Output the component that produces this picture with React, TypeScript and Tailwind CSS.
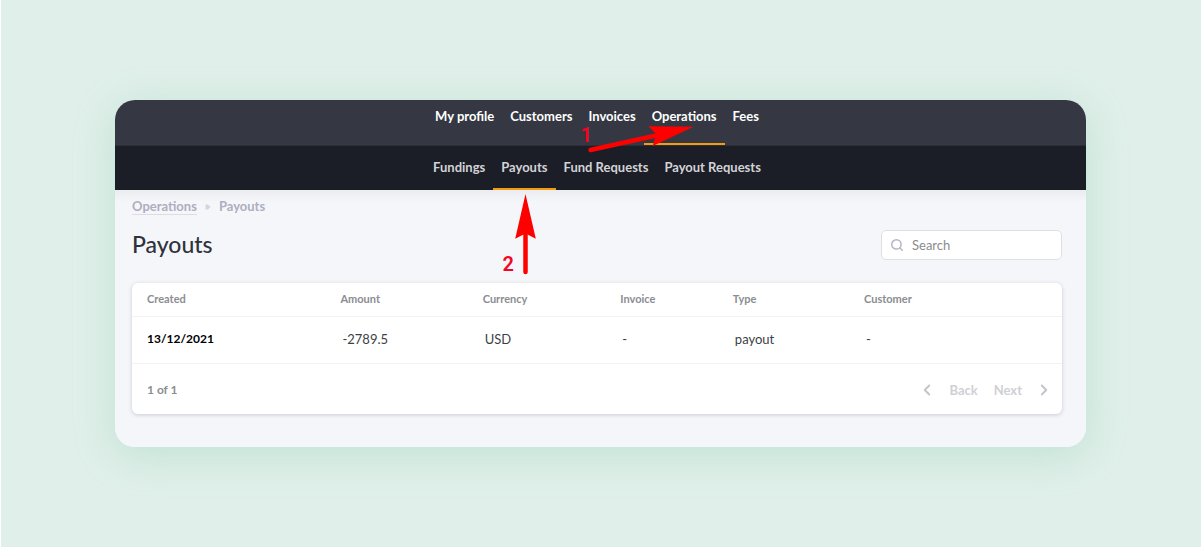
import { ChevronLeft, ChevronRight, Search } from "lucide-react";
import clsx from "clsx";

interface NavItem {
  label: string;
  active?: boolean;
}

interface Column {
  title: string;
  value: string;
  width: string;
}

const mainNav: NavItem[] = [
  { label: "My profile" },
  { label: "Customers" },
  { label: "Invoices" },
  { label: "Operations", active: true },
  { label: "Fees" },
];

const subNav: NavItem[] = [
  { label: "Fundings" },
  { label: "Payouts", active: true },
  { label: "Fund Requests" },
  { label: "Payout Requests" },
];

const columns: Column[] = [
  { title: "Created", value: "13/12/2021", width: "w-[20.8%]" },
  { title: "Amount", value: "-2789.5", width: "w-[15.3%]" },
  { title: "Currency", value: "USD", width: "w-[14.8%]" },
  { title: "Invoice", value: "-", width: "w-[12.1%]" },
  { title: "Type", value: "payout", width: "w-[14.1%]" },
  { title: "Customer", value: "-", width: "w-[22.9%]" },
];

function NavBar({ items, secondary }: { items: NavItem[]; secondary?: boolean }) {
  return (
    <nav
      aria-label={secondary ? "Operations" : "Main"}
      className={clsx(
        "flex justify-center pr-[7px] text-[13px] leading-4 font-bold",
        secondary ? "bg-[#1c1e27] text-[#d2d3d6]" : "border-b border-[#2b2e37] bg-[#353842] text-white"
      )}
    >
      {items.map((item) => (
        <a
          key={item.label}
          href="#"
          className={clsx(
            "border-b-2 px-2",
            secondary ? "pt-[13px] pb-[13px]" : "pt-2 pb-[19px]",
            item.active ? "border-[#f39c12]" : "border-transparent"
          )}
        >
          {item.label}
        </a>
      ))}
    </nav>
  );
}

function PayoutsTable() {
  return (
    <div className="overflow-hidden rounded-md bg-white shadow-[0_1px_4px_rgba(40,40,70,0.2)]">
      <table className="w-full table-fixed text-left">
        <thead>
          <tr className="border-b border-[#f2f2f4] text-[11px] leading-4 text-[#8b8d92]">
            {columns.map((col) => (
              <th key={col.title} className={clsx("px-[15px] pt-2 pb-[9px] font-bold", col.width)}>
                {col.title}
              </th>
            ))}
          </tr>
        </thead>
        <tbody>
          <tr className="border-b border-[#f2f2f4] text-[13px] leading-4 text-[#3c3f45]">
            {columns.map((col, i) => (
              <td
                key={col.title}
                className={clsx("pt-[14px] pb-4", i === 0 ? "px-[15px] text-xs font-bold text-black" : "px-[17px]")}
              >
                {col.value}
              </td>
            ))}
          </tr>
        </tbody>
      </table>

      {/* Pagination */}
      <div className="flex items-center justify-between pt-4 pr-[9px] pb-[14px] pl-[15px] text-[13px] leading-5 font-bold">
        <span className="text-xs text-[#8b8d92]">1 of 1</span>
        <div className="flex gap-4 text-[#cfd0d5]">
          <button type="button" className="flex items-center gap-[13px]">
            <ChevronLeft size={18} strokeWidth={2.5} className="text-[#c3c4ca]" />
            Back
          </button>
          <button type="button" className="flex items-center gap-[13px]">
            Next
            <ChevronRight size={18} strokeWidth={2.5} className="text-[#c3c4ca]" />
          </button>
        </div>
      </div>
    </div>
  );
}

// Numbered arrows pointing at the two menu entries
function StepArrows() {
  return (
    <svg
      width="361"
      height="190"
      viewBox="420 100 361 190"
      className="pointer-events-none absolute top-0 left-1/2 -translate-x-1/2"
      fill="#ff0000"
    >
      <path d="M590 150L658 135" stroke="#ff0000" strokeWidth="4.5" strokeLinecap="round" />
      <path d="M693 126.8L648 126.3L655.5 134L652.3 146Z" />
      <path d="M525 272V232" stroke="#ff0000" strokeWidth="4.5" strokeLinecap="round" />
      <path d="M525 194L514.7 238.8L525 233.5L535.3 238.8Z" />
      <g className="font-['Roboto',sans-serif] text-[20px] font-semibold" fill="#f5051f">
        <text x="580" y="142">
          1
        </text>
        <text x="502" y="271">
          2
        </text>
      </g>
    </svg>
  );
}

export default function App() {
  return (
    <div className="min-h-screen border-b border-l border-white bg-[#e0efea] pt-[100px] pr-[115px] pb-[100px] pl-[114px] font-['Lato',sans-serif]">
      <div className="relative overflow-hidden rounded-[20px] bg-[#f5f6fa] shadow-[0_8px_40px_rgba(120,200,160,0.3)]">
        <NavBar items={mainNav} />
        <NavBar items={subNav} secondary />

        <main className="bg-linear-to-b from-[#ebecf0] to-[#f5f6fa] to-[12px] pt-2 pr-6 pb-[33px] pl-[17px]">
          {/* Breadcrumbs */}
          <div className="flex items-start text-[13px] leading-4 font-bold text-[#aeaec0]">
            <a href="#" className="border-b border-[#dcdce2]">
              Operations
            </a>
            <svg width="6" height="6" viewBox="0 0 6 6" className="mx-2 mt-[6px]" fill="#d5d6dd">
              <path d="M0.5 0.5H3L5.5 3L3 5.5H0.5Z" />
            </svg>
            <span>Payouts</span>
          </div>

          <div className="mt-[15px] mb-[23px] flex items-start justify-between">
            <h1 className="text-[23px] leading-7 font-medium text-[#2f323b]">Payouts</h1>
            <label className="flex w-[181px] items-center gap-2 rounded-[5px] border border-[#dddfe5] bg-white px-2 py-[6px]">
              <Search size={14} strokeWidth={2.5} className="shrink-0 text-[#b3b5c6]" />
              <input
                type="text"
                aria-label="Search"
                placeholder="Search"
                className="w-full min-w-0 text-[13px] leading-4 outline-none placeholder:text-[#8a8b8f]"
              />
            </label>
          </div>

          <PayoutsTable />
        </main>

        <StepArrows />
      </div>
    </div>
  );
}
